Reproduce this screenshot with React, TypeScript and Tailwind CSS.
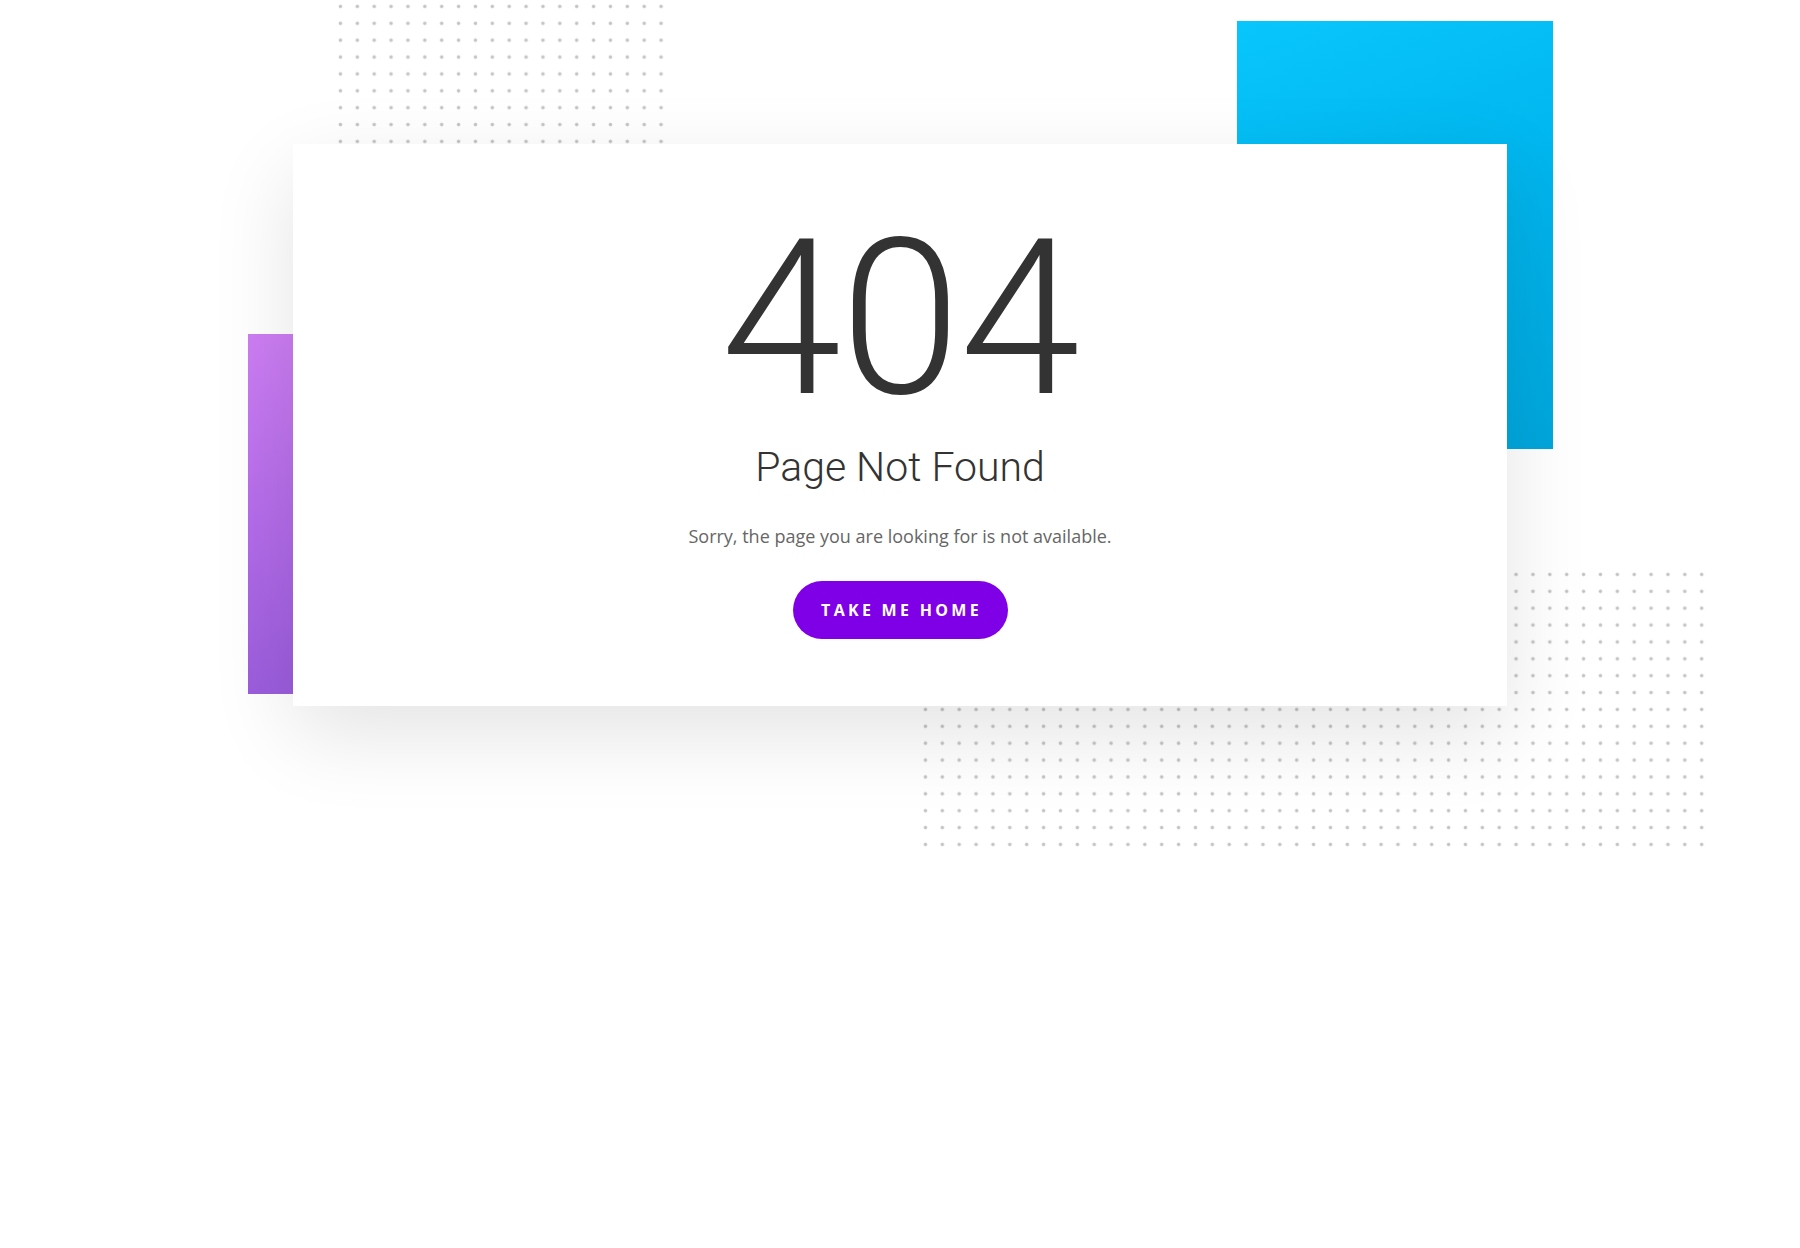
import React from "react";

export default function App() {
  return (
    <div className="relative w-full h-[1248px] overflow-hidden bg-white">
      {/* decorative dot grids and colour bars */}
      <div className="absolute left-[331.56px] top-[-2.44px] w-[337.6px] h-[168.8px] bg-[radial-gradient(circle,#c2c2c2_0.9px,#d4d4d4_1.5px,transparent_2.3px)] bg-[length:16.88px_16.88px]" />
      <div className="absolute left-[916.56px] top-[565.56px] w-[793.4px] h-[287px] bg-[radial-gradient(circle,#c2c2c2_0.9px,#d4d4d4_1.5px,transparent_2.3px)] bg-[length:16.88px_16.88px]" />
      <div className="absolute left-[1237px] top-[21px] w-[316px] h-[428px] bg-[linear-gradient(160deg,#08c6fc_0%,#00b4ec_50%,#00a6dc_100%)]" />
      <div className="absolute left-[248px] top-[334px] w-[50px] h-[360px] bg-[linear-gradient(165deg,#cd7ef3_0%,#b46ce9_50%,#9a5cdc_100%)]" />

      {/* card */}
      <div className="relative z-10 ml-[293px] mt-[144px] w-[1214px] h-[562px] bg-white shadow-[0_28px_80px_rgba(0,0,0,0.11)] flex flex-col items-center pt-[67px]">
        <div className="font-['Roboto',sans-serif] font-light text-[217px] leading-none text-[#333333] tracking-[-1px]">
          404
        </div>
        <div className="mt-[19px] font-['Roboto',sans-serif] font-light text-[41px] leading-none text-[#333333]">
          Page Not Found
        </div>
        <p className="mt-[35px] font-['Open_Sans',sans-serif] text-[18px] leading-[27px] text-[#666666]">
          Sorry, the page you are looking for is not available.
        </p>
        <button className="mt-[31px] w-[215px] h-[58px] rounded-full bg-[#7f00e6] text-white font-['Open_Sans',sans-serif] font-bold text-[16px] tracking-[3.3px] uppercase flex items-center justify-center pl-[3px]">
          Take me home
        </button>
      </div>
    </div>
  );
}
